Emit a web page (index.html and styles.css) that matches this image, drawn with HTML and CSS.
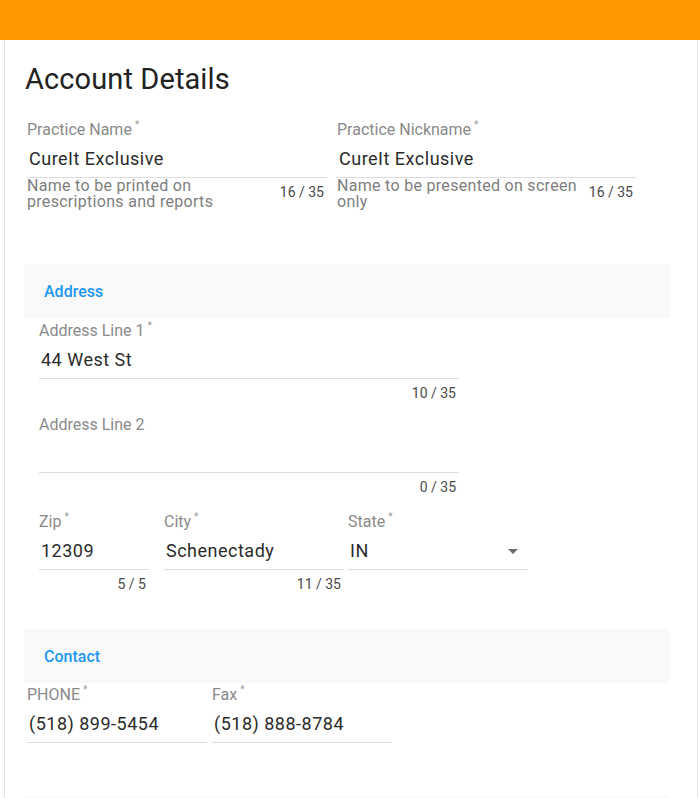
FILE: index.html
```html
<!DOCTYPE html>
<html>
<head>
<meta charset="utf-8">
<link rel="stylesheet" href="styles.css">
</head>
<body>
<div class="topbar"></div>
<div class="card">
  <h1 class="title">Account Details</h1>

  <div class="row row-top">
    <div class="field w300">
      <label class="label">Practice Name<sup>*</sup></label>
      <div class="value">CureIt Exclusive</div>
      <div class="meta">
        <span class="hint">Name to be printed on prescriptions and reports</span>
        <span class="counter">16 / 35</span>
      </div>
    </div>
    <div class="field w299">
      <label class="label">Practice Nickname<sup>*</sup></label>
      <div class="value">CureIt Exclusive</div>
      <div class="meta">
        <span class="hint">Name to be presented on screen only</span>
        <span class="counter">16 / 35</span>
      </div>
    </div>
  </div>

  <div class="section-head">Address</div>
  <div class="section-body inset">
    <div class="field w420 f-addr1">
      <label class="label">Address Line 1<sup>*</sup></label>
      <div class="value">44 West St</div>
      <div class="meta end"><span class="counter">10 / 35</span></div>
    </div>
    <div class="field w420 f-addr2">
      <label class="label">Address Line 2</label>
      <div class="value">&nbsp;</div>
      <div class="meta end"><span class="counter">0 / 35</span></div>
    </div>
    <div class="row row-zip">
      <div class="field w110">
        <label class="label">Zip<sup>*</sup></label>
        <div class="value">12309</div>
        <div class="meta end"><span class="counter">5 / 5</span></div>
      </div>
      <div class="field w180 ml15">
        <label class="label">City<sup>*</sup></label>
        <div class="value">Schenectady</div>
        <div class="meta end"><span class="counter">11 / 35</span></div>
      </div>
      <div class="field w180 ml4">
        <label class="label">State<sup>*</sup></label>
        <div class="value select"><span>IN</span><span class="caret"></span></div>
      </div>
    </div>
  </div>

  <div class="section-head contact">Contact</div>
  <div class="row row-contact">
    <div class="field w180">
      <label class="label">PHONE<sup>*</sup></label>
      <div class="value">(518) 899-5454</div>
    </div>
    <div class="field w180 ml5">
      <label class="label">Fax<sup>*</sup></label>
      <div class="value">(518) 888-8784</div>
    </div>
  </div>

  <div class="section-head next"></div>
</div>
</body>
</html>
```

FILE: styles.css
```css
html, body {
  margin: 0;
  padding: 0;
  background: #fff;
  font-family: Roboto, "Noto Sans", Arial, sans-serif;
  color: rgba(0,0,0,0.87);
}
.topbar {
  height: 40px;
  background: #ff9800;
}
.card {
  margin: 0 2px 0 4px;
  border-left: 1px solid #e4e4e4;
  border-right: 1px solid #e4e4e4;
  padding: 23px 27px 0 19px;
  height: 735px;
  overflow: hidden;
}
.title {
  margin: 0 0 0 1px;
  font-size: 29px;
  line-height: 32px;
  font-weight: 400;
  letter-spacing: 0.1px;
  color: #222;
}
.row {
  display: flex;
  align-items: flex-start;
}
.row-top {
  margin-top: 25px;
  padding-left: 3px;
}
.field {
  display: flex;
  flex-direction: column;
}
.w300 { width: 300px; }
.w299 { width: 299px; margin-left: 10px; }
.w420 { width: 420px; }
.w110 { width: 110px; }
.w180 { width: 180px; }
.ml15 { margin-left: 15px; }
.ml4 { margin-left: 4px; }
.ml5 { margin-left: 5px; }

.label {
  font-size: 16px;
  line-height: 20px;
  color: #8a8a8a;
  white-space: nowrap;
}
.label sup {
  font-size: 10px;
  line-height: 0;
  margin-left: 3px;
  vertical-align: 7px;
  color: #999;
}
.value {
  margin-top: 7px;
  padding: 0 0 6px 2px;
  font-size: 18px;
  line-height: 24px;
  letter-spacing: 0.5px;
  color: #2b2b2b;
  border-bottom: 1px solid #dcdcdc;
}
.meta {
  display: flex;
  justify-content: space-between;
  align-items: flex-start;
}
.meta.end {
  justify-content: flex-end;
}
.hint {
  font-size: 16px;
  line-height: 16px;
  letter-spacing: 0.3px;
  color: #7e7e7e;
  max-width: 248px;
}
.counter {
  margin-top: 6px;
  padding-right: 3px;
  font-size: 14px;
  line-height: 16px;
  color: #4a4a4a;
  white-space: nowrap;
}

.section-head {
  margin-top: 54px;
  height: 54px;
  background: #f9f9f9;
  display: flex;
  align-items: center;
  padding-left: 20px;
  font-size: 16px;
  font-weight: 500;
  color: #2196f3;
}
.section-body.inset {
  padding-left: 15px;
}
.f-addr1 { margin-top: 3px; }
.f-addr2 { margin-top: 14px; }
.row-zip { margin-top: 17px; }

.select {
  display: flex;
  justify-content: space-between;
  align-items: center;
  padding-right: 10px;
}
.caret {
  width: 0;
  height: 0;
  border-left: 5px solid transparent;
  border-right: 5px solid transparent;
  border-top: 5px solid #6b6b6b;
}
.section-head.contact {
  margin-top: 37px;
}
.row-contact {
  margin-top: 2px;
  padding-left: 3px;
}
.section-head.next {
  margin-top: 54px;
}
```
